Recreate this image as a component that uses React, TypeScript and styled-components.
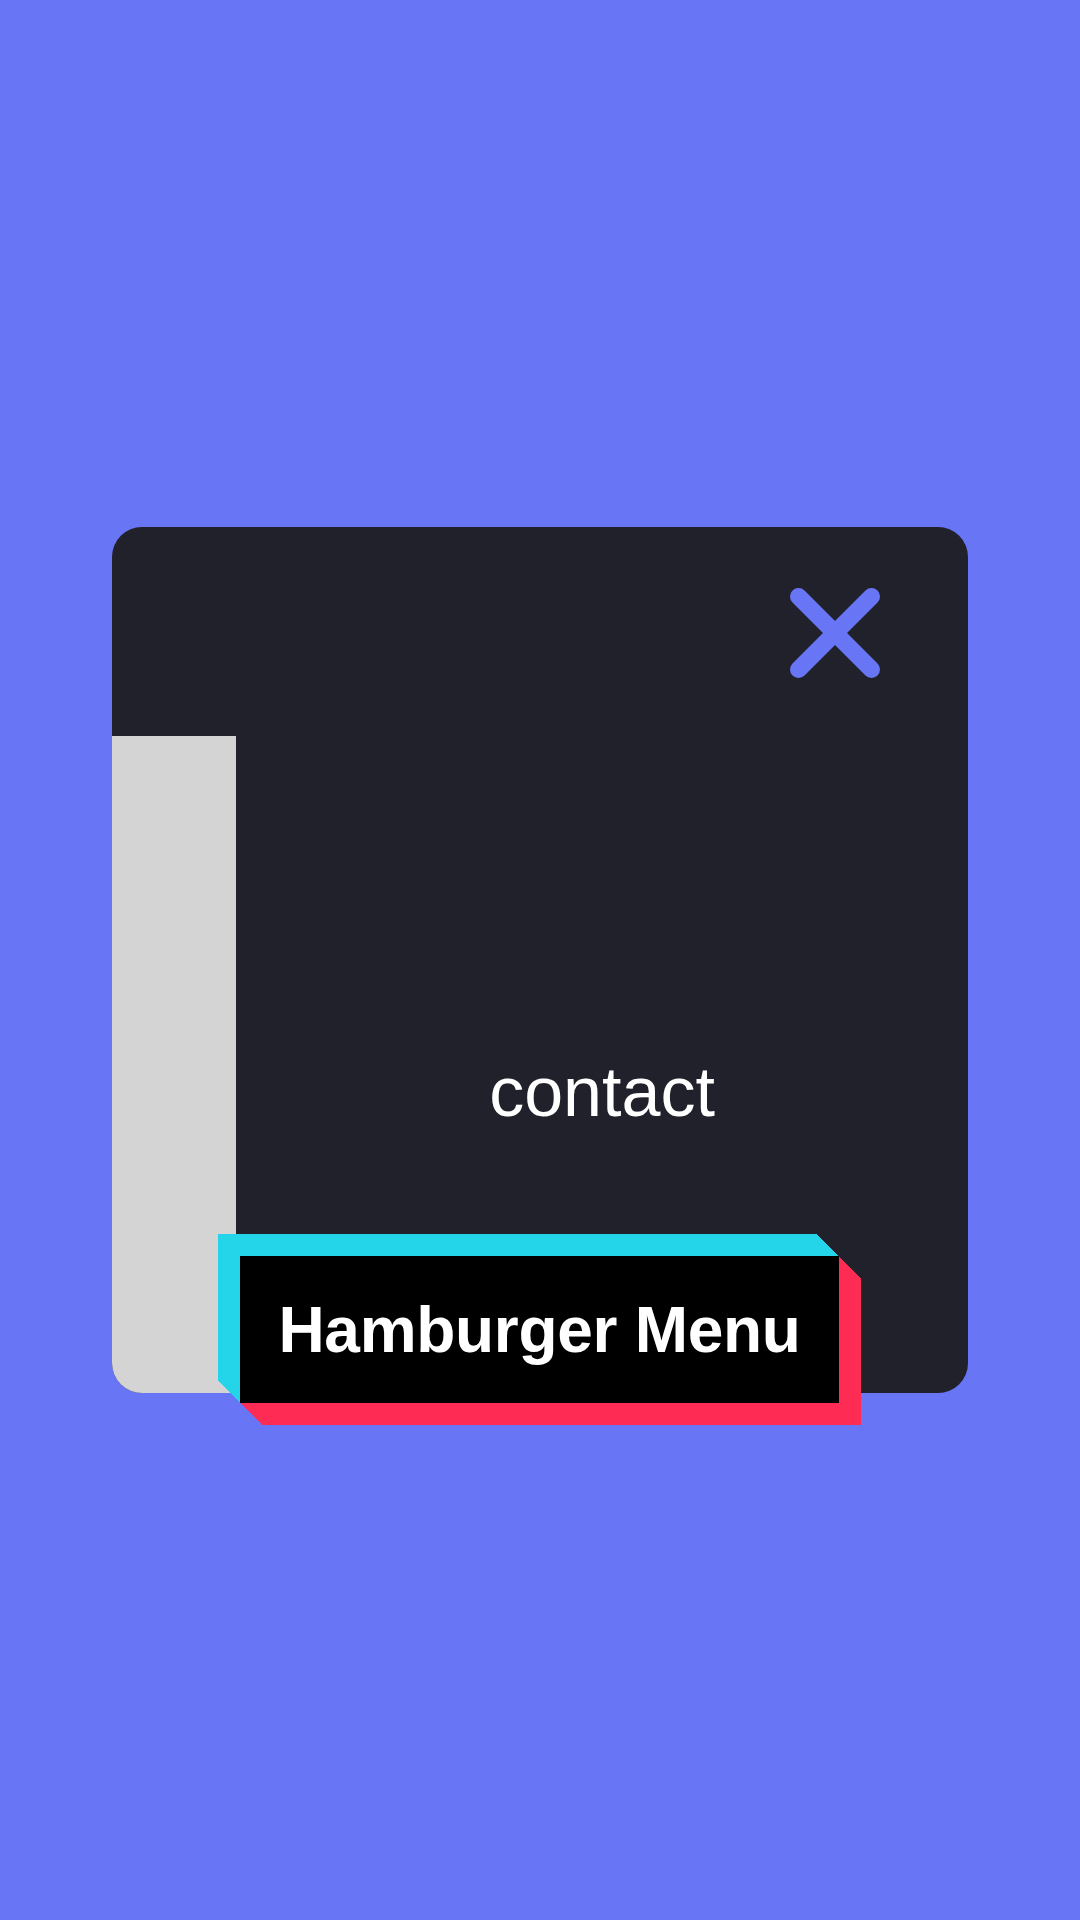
import React from "react";
import styled, { createGlobalStyle } from "styled-components";

const Global = createGlobalStyle`
  html, body { margin: 0; padding: 0; }
  body { background: #6875f5; font-family: "Liberation Sans", Arial, sans-serif; }
`;

const Page = styled.div`
  width: 1080px;
  height: 1920px;
  display: flex;
  align-items: center;
  justify-content: center;
  background: #6875f5;
`;

const Card = styled.div`
  position: relative;
  width: 856px;
  height: 866px;
  background: #21212b;
  border-radius: 30px;
  display: grid;
  grid-template-rows: 209px 1fr;
`;

const Header = styled.div`
  display: flex;
  justify-content: flex-end;
  align-items: flex-start;
  padding: 61px 88px 0 0;
`;

const CloseButton = styled.button`
  width: 90px;
  height: 90px;
  padding: 0;
  border: none;
  background: transparent;
  display: block;
  cursor: pointer;
  svg { display: block; }
`;

const Body = styled.div`
  display: grid;
  grid-template-columns: 124px 1fr;
`;

const Sidebar = styled.div`
  background: #d4d4d4;
  border-bottom-left-radius: 30px;
`;

const MenuList = styled.ul`
  list-style: none;
  margin: 0;
  padding: 321px 0 0 0;
  display: flex;
  flex-direction: column;
  align-items: center;
`;

const MenuItem = styled.li`
  color: #ffffff;
  font-family: "Liberation Sans", Arial, sans-serif;
  font-size: 70px;
  line-height: 1;
  font-weight: 400;
`;

const shadowSteps = (dir: number, color: string) =>
  Array.from({ length: 22 }, (_, i) => `${dir * (i + 1)}px ${dir * (i + 1)}px 0 ${color}`).join(", ");

const Badge = styled.div`
  position: absolute;
  left: 128px;
  top: 729px;
  width: 599px;
  height: 147px;
  background: #000000;
  display: flex;
  align-items: center;
  justify-content: center;
  box-shadow: ${shadowSteps(-1, "#24d5ea")}, ${shadowSteps(1, "#fe2c55")};
`;

const BadgeText = styled.span`
  color: #ffffff;
  font-family: "Liberation Sans", Arial, sans-serif;
  font-weight: 700;
  font-size: 64px;
  line-height: 1;
  letter-spacing: -0.3px;
`;

export default function App() {
  return (
    <>
      <Global />
      <Page>
        <Card>
          <Header>
            <CloseButton aria-label="close">
              <svg width="90" height="90" viewBox="0 0 90 90">
                <g stroke="#6875f5" strokeWidth="17" strokeLinecap="round">
                  <line x1="8.5" y1="8.5" x2="81.5" y2="81.5" />
                  <line x1="81.5" y1="8.5" x2="8.5" y2="81.5" />
                </g>
              </svg>
            </CloseButton>
          </Header>
          <Body>
            <Sidebar />
            <MenuList>
              <MenuItem>contact</MenuItem>
            </MenuList>
          </Body>
          <Badge>
            <BadgeText>Hamburger Menu</BadgeText>
          </Badge>
        </Card>
      </Page>
    </>
  );
}
